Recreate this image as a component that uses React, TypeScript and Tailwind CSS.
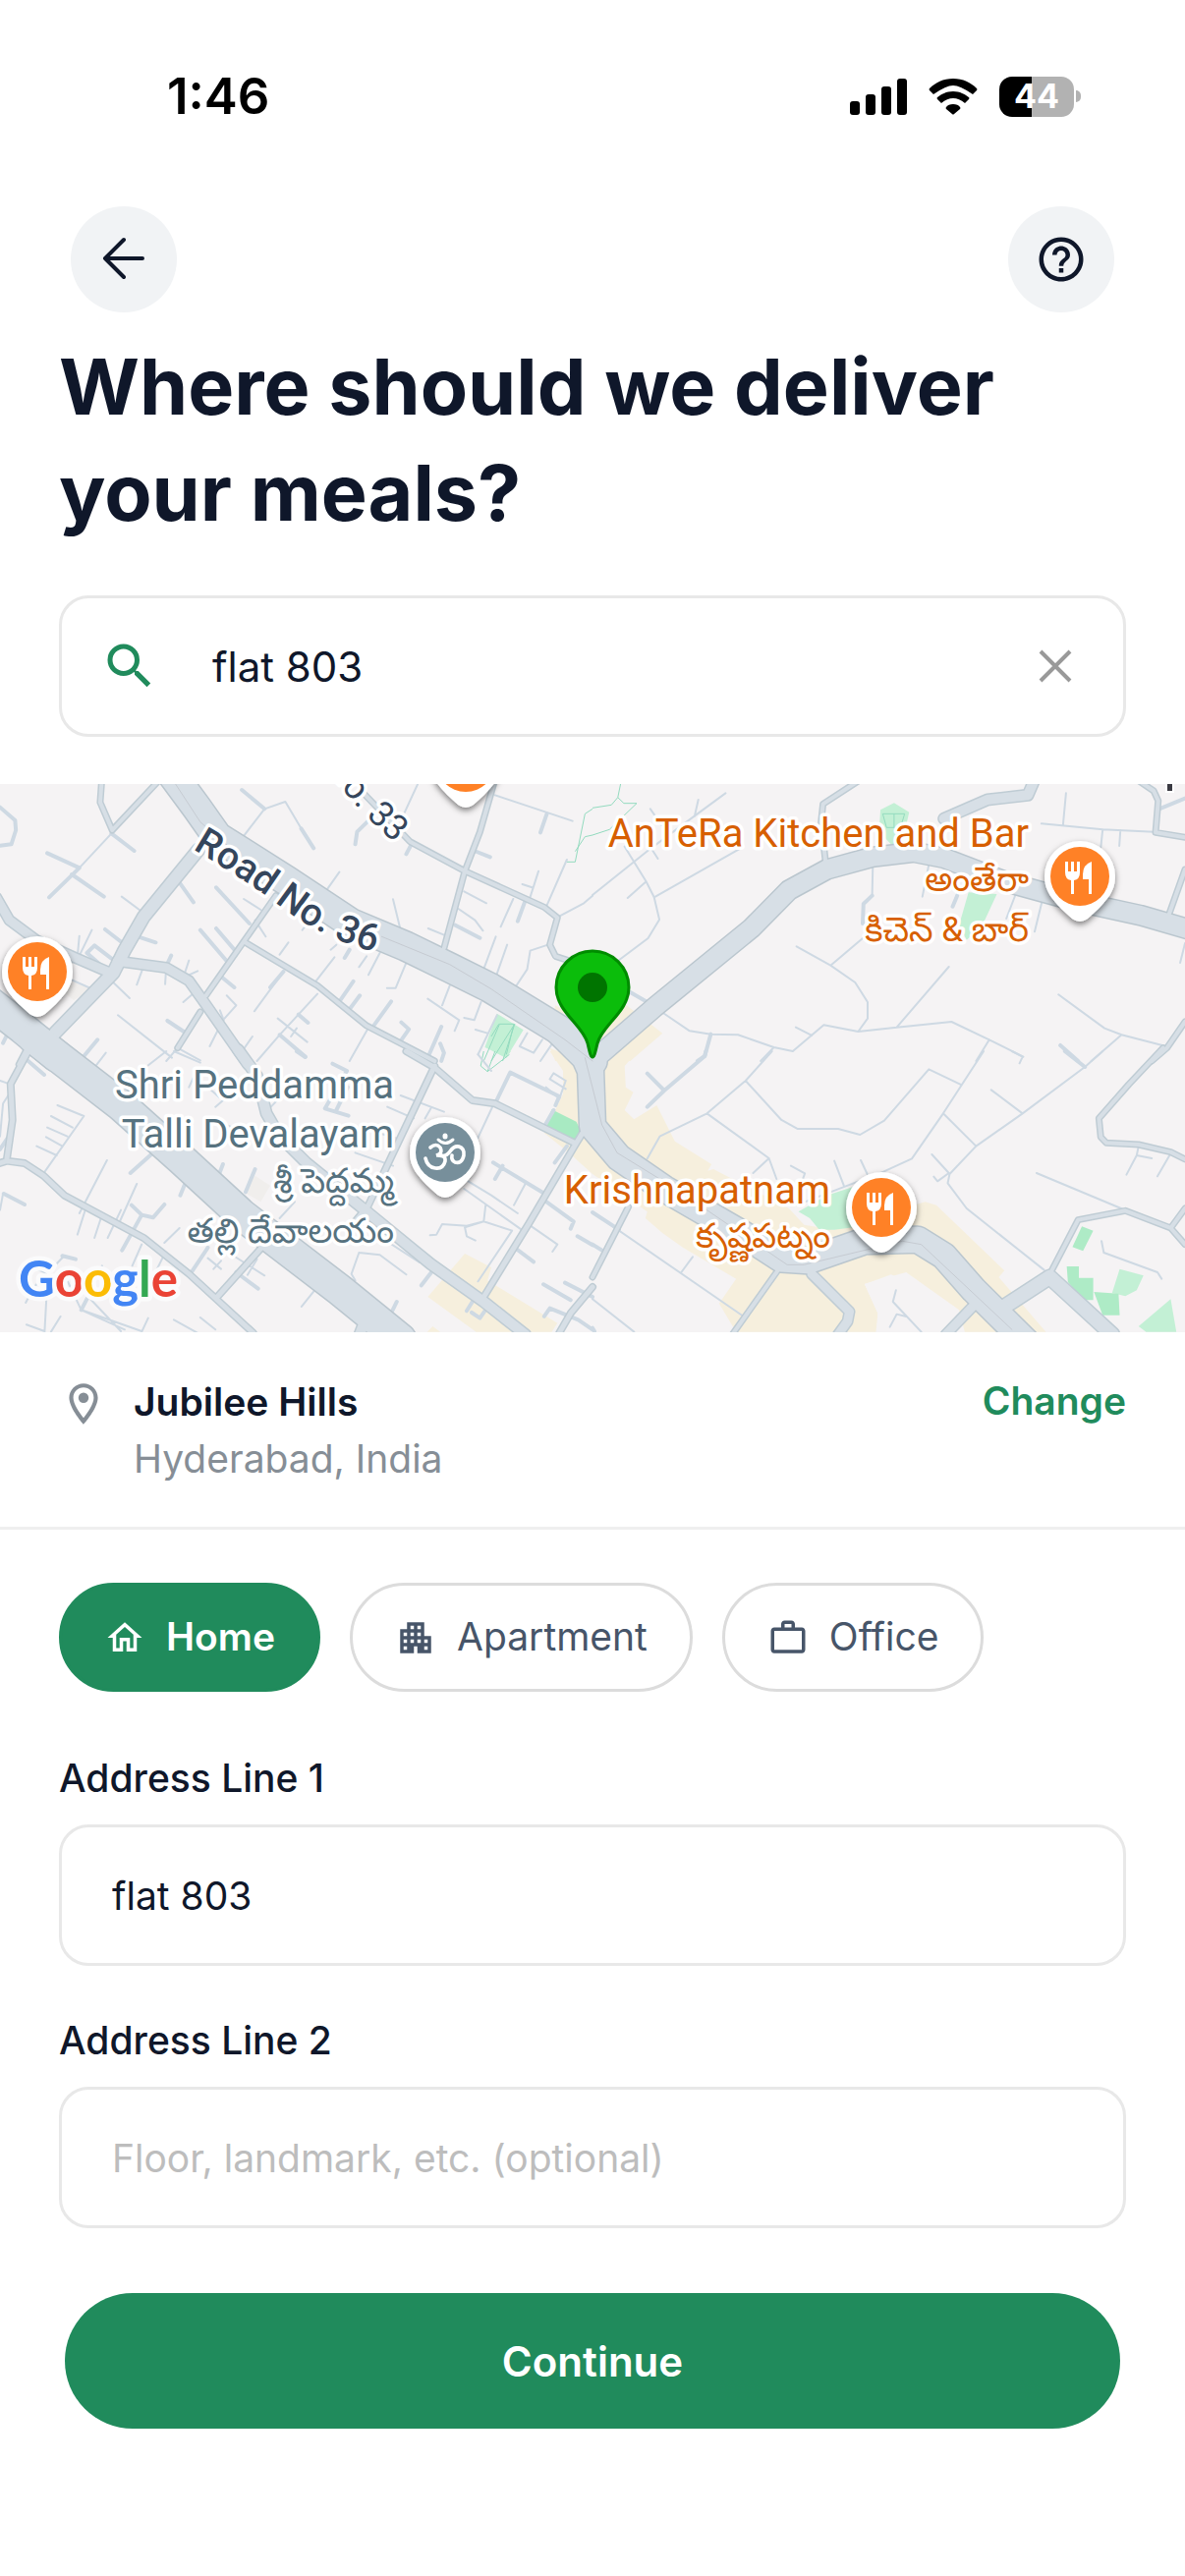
import { useState } from "react";
import {
  MdApartment,
  MdHelpOutline,
  MdOutlineHome,
  MdOutlineLocationOn,
  MdSearch,
  MdWorkOutline,
} from "react-icons/md";

type Tile = "nw" | "ne" | "sw" | "se";
type Road = { tile: Tile; width: number; d: string };

const tileTransform: Record<Tile, string> = {
  nw: "translate(0 -8) scale(0.3846 0.3333)",
  ne: "translate(603 -8) scale(0.3846 0.3333)",
  sw: "translate(0 272) scale(0.3846 0.3333)",
  se: "translate(603 272) scale(0.3846 0.3333)",
};

const lanes: Road[] = [
  {
    tile: "nw",
    width: 4,
    d: "M0 95L40 135L42 165L30 208L0 212M640 42L700 100M295 175L355 228M125 235L210 280M190 300L275 368M210 280L130 370M475 325L512 385M572 340L660 450M530 470L600 565M572 465L620 530M278 468L325 510M365 490L412 508M797 160L830 220M985 125L945 170L940 208M1090 205L1075 238M1255 228L1297 247M1447 115L1430 172M1390 380L1370 443M1205 455L1270 494M585 612L620 645M443 747L490 783M453 548L440 580M935 627L900 685M952 670L925 712M1035 688L990 760M750 597L715 645M790 728L815 753M740 790L808 857M1062 752L1082 773L1062 806M1168 765L1130 865M1165 817L1175 845L1168 870M258 805L215 865M25 775L8 815M925 530L912 555M230 540L250 517L295 557M230 540L265 575",
  },
  {
    tile: "nw",
    width: 2,
    d: "M640 190L700 100L755 78L797 160M295 175L210 280M322 368L380 418M645 375L690 408M675 440L703 490M210 488L205 550M243 470L205 560M190 622L240 648M295 625L343 678M377 590L362 637M440 580L437 635M500 563L485 615L523 595M312 730L455 860M550 690L470 830L440 870M470 830L530 868M600 670L625 700L590 745L555 825M582 715L592 745M510 665L485 690M763 508L740 545M750 597L673 718M885 553L830 635M840 665L740 790L680 870M735 740L813 812M785 770L770 795M668 795L635 850M975 768L925 870M1105 25L1065 125M898 293L858 358M1040 376L1060 470M820 440L800 470M1310 58L1515 137M1425 290L1400 380M1382 330L1408 340M1500 255L1445 400M1480 428L1545 388L1568 365M1358 375L1325 460M1228 352L1287 388M1213 405L1257 440L1278 472M1133 465L1175 485M1312 490L1278 595M1342 515L1310 620M1450 515L1403 533L1395 590L1365 642M1005 540L975 607M970 550L950 583M890 515L875 530M1075 570L1047 647L1024 647M1190 640L1170 700M1132 680L1215 745L1203 778M1273 690L1255 745L1228 738M1315 730L1265 850M1258 774L1290 785M1395 785L1375 825L1412 845L1435 805M1480 785L1430 870",
  },
  {
    tile: "ne",
    width: 2,
    d: "M280 72L270 123M352 52L260 130L155 220L0 363M153 100L183 150M85 215L142 322L163 370L177 438L147 495L70 562M155 220L173 252M142 322L93 372M163 370L390 222M742 265L740 365L717 390L715 450M890 270L873 368M965 360L953 398M1120 360L1095 435M1190 380L1170 475M725 485L630 578M540 520L630 578L695 630L728 690L728 740L703 780M943 582L805 767M183 720L257 778L313 788L385 790L480 828L530 840L612 760L703 780L805 767L950 750L1050 805L1140 857M538 767L580 792M480 828L445 870M1050 805L1015 870M1233 667L1355 770L1400 790L1518 825M1400 790L1320 870M1188 145L1350 163L1485 170M1253 52L1245 150M1350 163L1345 218M1397 165L1394 213M1568 510L1555 570",
  },
  {
    tile: "ne",
    width: 4,
    d: "M313 788L297 855L278 870M1238 822L1285 870M740 365L717 390L715 450M965 365L953 398M1500 100L1568 68M100 660L145 690",
  },
  {
    tile: "sw",
    width: 2,
    d: "M0 90L20 98M30 120L8 160L0 260M152 165L222 198L117 370M135 198L192 233M125 233L178 260M122 262L165 290M97 290L150 318M283 333L210 495M8 435L0 485M225 487L205 560M267 510L250 570M320 485L285 570M362 405L315 525M280 5L250 50M440 0L340 90M460 0L530 35M520 60L500 110M475 540L435 585M375 590L350 655M435 620L405 690M270 655L215 790M170 625L90 720L68 768M65 650L180 705L215 790L375 855M215 790L330 850M180 685L320 855M125 710L118 857M70 835L118 855M160 810L135 857M392 815L375 857M460 820L530 865M550 632L585 665M585 640L565 665M605 615L700 685M680 635L655 683M530 813L570 850M845 712L798 780M780 460L740 510M585 525L565 560M940 310L1040 350M975 240L1060 270M1060 135L1175 185M1025 170L1095 205M1140 175L1125 205M1305 165L1240 325M1150 335L1300 440L1370 495M1228 420L1380 545M1285 470L1280 520L1355 548M1280 520L1230 538L1235 565L1258 578M1280 520L1235 533L1170 528L1155 560L1138 562M1390 405L1360 470M1355 548L1265 703M950 615L1005 622L1075 682M1010 570L1110 645M950 615L930 680L940 700M1400 530L1475 590L1462 612M1445 110L1480 145M1497 90L1480 145M1497 90L1465 67L1455 85L1497 115M580 140L540 100M600 140L570 170M555 205L680 262M750 130L700 190M1300 60L1265 10",
  },
  {
    tile: "sw",
    width: 4,
    d: "M65 20L117 72M10 435L65 468M20 265L0 300M500 375L477 440M345 372L420 295M348 470L375 500L405 508L435 468M375 500L323 608M165 625L200 635M232 752L215 790M550 600L505 678M625 675L683 725M675 360L650 430M590 345L580 375M1145 670L1115 715M1050 765L1035 800M1310 160L1350 65L1480 138M1480 138L1470 165M1440 230L1465 180M1305 340L1437 432M1330 350L1310 390M1500 290L1468 340M1440 455L1518 520L1510 542M1528 565L1568 592M1362 600L1412 643M1438 712L1510 760M1495 707L1568 750M1440 810L1455 785L1530 820L1568 850M1250 765L1235 793M1248 798L1270 815L1282 795M785 0L808 18M880 38L918 60L860 175M860 175L922 197M920 110L890 180",
  },
  {
    tile: "se",
    width: 2,
    d: "M475 0L405 90L303 190L178 260L145 328M405 90L500 210L542 237L650 237L708 255L772 212L890 55L977 103M1035 0L977 103L928 190L845 328L770 368L540 470M303 190L467 327L487 390M467 327L425 372M525 350L562 373L550 410M640 335L665 410M710 333L727 375M928 190L1015 290L945 375L940 403L990 480L1195 668M1055 118L1138 190M1350 0L1303 48L1138 190L1015 290M898 315L943 372L913 397L903 383M1175 372L1405 483M1445 290L1440 318L1413 377M1440 318L1480 327M1527 318L1495 382M1347 580L1353 615L1495 675L1506 695M803 730L795 765L870 857M830 810L805 803L787 842M0 492L400 810M265 628L235 675M0 757L110 857M1110 0L1138 17L1130 37",
  },
  {
    tile: "se",
    width: 4,
    d: "M300 0L297 15L190 120L145 170M145 68L190 120M1250 0L1303 48M0 492L70 545M0 590L25 608M0 845L5 855",
  },
];

const streets: Road[] = [
  {
    tile: "nw",
    width: 7,
    d: "M270 0L265 80L297 165M415 20L297 165M960 50L1085 200L1230 290L1440 400L1475 432L1455 515L1470 550L1510 565M1310 10L1270 170L1230 290L1175 525M730 365L645 505L545 670M645 505L840 640L970 762L1150 870M530 720L470 830M75 825L50 880",
  },
  {
    tile: "nw",
    width: 12,
    d: "M-10 370L25 440L95 500L200 555L290 600M310 565L440 585L500 625L540 690L655 880",
  },
  { tile: "nw", width: 15, d: "M525 225L380 430L330 530L300 600L145 785" },
  {
    tile: "ne",
    width: 7,
    d: "M710 10L610 85L605 140L618 275M1440 10L1485 45L1497 75L1490 172L1568 187M1568 285L1523 430M1568 750L1520 830L1480 870",
  },
  { tile: "ne", width: 13, d: "M1170 10L1152 58L1045 72L930 130" },
  {
    tile: "sw",
    width: 8,
    d: "M75 0L28 100L33 210L18 330M-10 345L18 335L65 342L115 380L170 440L380 570L500 680L670 860M1075 0L1150 50L1250 150L1310 160L1520 280M1150 45L1020 360L975 470L940 520M575 750L700 590M1568 200L1520 290L1400 525L1275 760M1568 720L1510 800L1480 860",
  },
  {
    tile: "sw",
    width: 13,
    d: "M630 -5L680 75L705 190L740 260L810 340L960 480L1140 650L1280 765L1390 865M970 810L950 870",
  },
  {
    tile: "se",
    width: 7,
    d: "M1510 -10L1420 100L1340 205L1345 262L1360 280L1445 285L1530 308L1568 330M1215 670L1285 515L1410 487L1530 540L1568 590M1530 540L1568 480M95 475L0 690M490 670L370 865",
  },
  { tile: "se", width: 12, d: "M580 680L680 795L675 825L650 865M1010 775L935 865" },
  { tile: "se", width: 17, d: "M1090 780L1210 690L1375 865" },
];

const highways: Road[] = [
  {
    tile: "nw",
    width: 30,
    d: "M440 -30L520 95L575 185L760 320L930 450L1075 520L1190 585L1295 645L1480 775L1568 870",
  },
  { tile: "nw", width: 32, d: "M-40 680L60 770L150 855" },
  {
    tile: "ne",
    width: 20,
    d: "M0 870L165 705L420 465L520 348L620 285L740 247L850 232L930 250L1100 325L1290 385L1450 425L1600 475",
  },
  { tile: "sw", width: 32, d: "M90 -40L320 165L480 330L640 500L900 730L1060 880" },
  {
    tile: "se",
    width: 27,
    d: "M-90 -60L-20 20L-5 60L0 230L70 325L190 420L400 560L500 635L570 640L720 580L860 575L930 625L1010 730L1150 890",
  },
];

const medians: Road[] = [
  { tile: "nw", width: 1, d: "M465 25L530 140L600 210M1010 490L1190 575L1300 650L1495 805L1568 870" },
  { tile: "se", width: 1, d: "M-20 20L25 225L65 310L220 420L515 652L560 652L820 580L870 590L1110 850" },
];

const patches: { tile: Tile; fill: string; d: string }[] = [
  { tile: "ne", fill: "#f6efdd", d: "M0 700L90 700L185 785L100 870L0 870Z" },
  { tile: "nw", fill: "#f6efdd", d: "M1460 740L1470 700L1500 720ZM1455 830L1520 860L1500 870L1470 870Z" },
  { tile: "nw", fill: "#f0eeec", d: "M190 625L240 650L195 685L160 650Z" },
  { tile: "sw", fill: "#f0eeec", d: "M675 380L715 410L690 460L645 430Z" },
  {
    tile: "sw",
    fill: "#f6efdd",
    d: "M1455 0L1568 0L1568 375L1505 310L1440 250L1490 130L1490 60ZM1230 618L1300 660L1290 700L1475 830L1460 857L1260 857L1132 750ZM1145 840L1165 857L1130 857Z",
  },
  {
    tile: "se",
    fill: "#f6efdd",
    d: "M0 0L120 0L85 45L88 110L108 125L85 180L110 208L170 165L218 275L315 345L305 365L320 360L520 480L560 530L640 545L880 460L910 470L1090 670L1075 690L1200 857L985 857L970 790L830 675L720 710L755 800L750 857L380 857L335 770L380 695L240 600L185 555L140 510L145 490L0 375Z",
  },
  { tile: "se", fill: "#f5f3f4", d: "M720 712L790 682L820 695L830 675L985 857L753 857L755 800Z" },
  {
    tile: "se",
    fill: "#c3f0d5",
    d: "M545 490L620 440L700 410L740 530L640 545L600 545L575 510ZM1395 665L1458 685L1440 730L1410 748L1375 738ZM1530 757L1545 857L1465 857L1445 840Z",
  },
  {
    tile: "se",
    fill: "#aeebc6",
    d: "M1295 535L1325 548L1298 610L1270 598ZM1255 657L1287 657L1287 692L1325 692L1325 760L1300 760L1258 705ZM1327 735L1392 740L1395 806L1350 806Z",
  },
  { tile: "sw", fill: "#a8eac2", d: "M1460 178L1525 215L1540 250L1520 280L1442 230ZM970 832L1000 857L965 857Z" },
  { tile: "nw", fill: "#c3f0d5", d: "M1315 725L1385 775L1340 860L1283 828Z" },
  { tile: "sw", fill: "#c3f0d5", d: "M1305 0L1352 0L1338 20Z" },
  { tile: "ne", fill: "#c3f0d5", d: "M798 82L838 110L830 150L800 220L775 190L760 140L762 103ZM995 355L1070 360L1030 460L990 500L970 455Z" },
];

const trails: { tile: Tile; d: string }[] = [
  { tile: "nw", d: "M1500 262L1522 262L1548 115L1568 100M1522 230L1548 185L1568 180M1280 870L1322 757L1360 757L1340 850M1300 870L1362 757L1330 870M1320 757L1300 795" },
  { tile: "ne", d: "M75 20L67 65L50 88L0 97M67 65L83 83L117 83L45 163L0 180M768 115L826 115L815 157L778 157ZM798 115L798 157" },
  { tile: "sw", d: "M1280 0L1272 45L1290 62L1348 10M1310 0L1290 62" },
];

function RoadSet({ roads, color, extra = 0 }: { roads: Road[]; color: string; extra?: number }) {
  return (
    <>
      {roads.map((road, i) => (
        <g key={i} transform={tileTransform[road.tile]}>
          <path
            d={road.d}
            fill="none"
            stroke={color}
            strokeWidth={road.width + extra}
            strokeLinejoin="round"
            strokeLinecap="round"
            vectorEffect="non-scaling-stroke"
          />
        </g>
      ))}
    </>
  );
}

function PlacePin({ x, y, color, children }: { x: number; y: number; color: string; children: React.ReactNode }) {
  return (
    <g transform={`translate(${x} ${y})`}>
      <path
        d="M0 -36A36 36 0 0 1 36 0C36 16 27 24 19 33L8 43Q0 49 -8 43L-19 33C-27 24 -36 16 -36 0A36 36 0 0 1 0 -36Z"
        fill="#fff"
        filter="url(#pin-shadow)"
      />
      <circle r="30" fill={color} />
      {children}
    </g>
  );
}

function Cutlery() {
  return (
    <path
      d="M-15 -15V-4Q-15 3 -9 4V18H-6V4Q0 3 0 -4V-15H-3V-5H-6V-15H-9V-5H-12V-15ZM12 -15Q3 -12 3 -2V3H9V18H12Z"
      fill="#fff"
    />
  );
}

type PlaceLabelProps = {
  x: number;
  color: string;
  english: [string, number][];
  telugu: [string, number][];
};

function PlaceLabel({ x, color, english, telugu }: PlaceLabelProps) {
  return (
    <g fill={color} textAnchor="end" stroke="#fff" strokeWidth="7" strokeLinejoin="round" paintOrder="stroke">
      {english.map(([text, y]) => (
        <text key={text} x={x} y={y} fontSize="40">
          {text}
        </text>
      ))}
      {telugu.map(([text, y]) => (
        <text key={text} x={x} y={y} fontSize="35">
          {text}
        </text>
      ))}
    </g>
  );
}

const logoLetters: [string, string][] = [
  ["G", "#4285f4"],
  ["o", "#ea4335"],
  ["o", "#fbbc05"],
  ["g", "#4285f4"],
  ["l", "#34a853"],
  ["e", "#ea4335"],
];

function DeliveryMap() {
  return (
    <svg
      className="block h-[558px] w-full font-[Roboto,'Noto_Sans_Telugu','Noto_Sans',sans-serif]"
      viewBox="0 0 1206 558"
      preserveAspectRatio="xMidYMid slice"
      role="img"
      aria-label="Map of Jubilee Hills, Hyderabad"
    >
      <defs>
        <filter id="pin-shadow" x="-30%" y="-30%" width="160%" height="170%">
          <feDropShadow dx="0" dy="3" stdDeviation="3" floodColor="#000" floodOpacity="0.5" />
        </filter>
        <path id="road-36" d="M196 66Q260 104 290 128Q336 162 400 176" />
        <path id="road-33" d="M280 -66L342 -4Q366 30 402 60" />
      </defs>
      <rect width="1206" height="558" fill="#f5f3f4" />
      {patches.map((patch, i) => (
        <path key={i} d={patch.d} fill={patch.fill} transform={tileTransform[patch.tile]} />
      ))}
      {trails.map((trail, i) => (
        <path
          key={i}
          d={trail.d}
          fill="none"
          stroke="#93dbbf"
          strokeWidth="1"
          vectorEffect="non-scaling-stroke"
          transform={tileTransform[trail.tile]}
        />
      ))}
      <RoadSet roads={lanes} color="#ced9e3" />
      <RoadSet roads={streets} color="#bfccd4" />
      <RoadSet roads={highways} color="#bac6ce" extra={2} />
      <RoadSet roads={streets} color="#d7dfe6" extra={-3} />
      <RoadSet roads={highways} color="#d7dfe6" extra={-1} />
      <RoadSet roads={medians} color="#c6cbd2" />

      <g fill="#35465c" stroke="#fff" strokeWidth="7" strokeLinejoin="round" paintOrder="stroke">
        <text fontSize="39" fontWeight="500">
          <textPath href="#road-36">Road No. 36</textPath>
        </text>
        <text fontSize="36" textAnchor="end">
          <textPath href="#road-33" startOffset="100%">
            No. 33
          </textPath>
        </text>
      </g>
      <path d="M1188 0H1193V7H1188Z" fill="#3a3a42" stroke="#fff" strokeWidth="4" paintOrder="stroke" />

      <PlaceLabel
        x={1047}
        color="#d75f00"
        english={[["AnTeRa Kitchen and Bar", 64]]}
        telugu={[
          ["అంతేరా", 109],
          ["కిచెన్ & బార్", 160],
        ]}
      />
      <PlaceLabel
        x={401}
        color="#56727f"
        english={[
          ["Shri Peddamma", 320],
          ["Talli Devalayam", 370],
        ]}
        telugu={[
          ["శ్రీ పెద్దమ్మ", 416],
          ["తల్లి దేవాలయం", 467],
        ]}
      />
      <PlaceLabel
        x={845}
        color="#d75f00"
        english={[["Krishnapatnam", 427]]}
        telugu={[["కృష్ణపట్నం", 472]]}
      />

      <PlacePin x={1099} y={94} color="#ff8126">
        <Cutlery />
      </PlacePin>
      <PlacePin x={38} y={191} color="#ff8126">
        <Cutlery />
      </PlacePin>
      <PlacePin x={897} y={431} color="#ff8126">
        <Cutlery />
      </PlacePin>
      <PlacePin x={474} y={-22} color="#ff8126">
        <Cutlery />
      </PlacePin>
      <PlacePin x={453} y={375} color="#778f9b">
        <g fill="none" stroke="#fff" strokeWidth="3.6" strokeLinecap="round">
          <path d="M-15 -5Q-9 -10 -5 -5Q-2 1 -9 3Q1 2 0 9Q-2 17 -10 16Q-18 15 -20 6" />
          <path d="M-6 3Q1 5 5 -1Q9 -7 14 -6Q20 -4 19 3Q17 12 10 10Q6 8 7 3" />
          <path d="M-7 -13Q0 -6 8 -13" strokeWidth="3" />
          <path d="M0 -17V-16" strokeWidth="5" />
        </g>
      </PlacePin>

      <path
        d="M603 278C601 278 600 272 598 264C593 245 566 232 566 207A37 37 0 0 1 640 207C640 232 613 245 608 264C606 272 605 278 603 278Z"
        fill="#0bbd0b"
        stroke="#008c00"
        strokeWidth="3"
      />
      <circle cx="603" cy="207" r="15" fill="#007400" />

      <text
        x="19"
        y="522"
        fontSize="51"
        className="font-[Lato,sans-serif]"
        fontWeight="700"
        stroke="#fbfbfc"
        strokeWidth="9"
        strokeLinejoin="round"
        paintOrder="stroke"
      >
        {logoLetters.map(([letter, color], i) => (
          <tspan key={i} fill={color}>
            {letter}
          </tspan>
        ))}
      </text>
    </svg>
  );
}

function StatusBar() {
  return (
    <div className="flex items-center justify-between pt-[72px] pr-[106px] pl-[170px]">
      <span className="text-[51px] leading-[52px] font-semibold text-black">1:46</span>
      <div className="flex items-center gap-[22px]">
        <svg className="h-[38px] w-[58px]" viewBox="0 0 58 38" aria-hidden="true">
          <rect x="0" y="24" width="10" height="14" rx="3" />
          <rect x="16" y="17" width="10" height="21" rx="3" />
          <rect x="32" y="9" width="10" height="29" rx="3" />
          <rect x="48" y="1" width="10" height="37" rx="3" />
        </svg>
        <svg className="h-[38px] w-[50px]" viewBox="0 0 50 38" aria-hidden="true">
          <path d="M25 1C15 1 7 5 1 11Q0 12 1 13L5 17Q18 8 25 8Q32 8 45 17L49 13Q50 12 49 11C43 5 35 1 25 1Z" />
          <path d="M25 14C18 14 13 17 9 20Q8 21 9 22L13 26Q19 21 25 21Q31 21 37 26L41 22Q42 21 41 20C37 17 32 14 25 14Z" />
          <path d="M25 27C22 27 19 28 18 30Q17 31 18 32L24 37Q25 38 26 37L32 32Q33 31 32 30C31 28 28 27 25 27Z" />
        </svg>
        <div className="flex items-center gap-[2px]">
          <div className="flex h-[41px] w-[76px] items-center justify-center rounded-[13px] bg-[linear-gradient(to_right,#000_33px,#b2b2b2_33px)] text-[34px] leading-none font-bold text-white">
            44
          </div>
          <div className="h-[12px] w-[5px] rounded-r-full bg-[#b2b2b2]" />
        </div>
      </div>
    </div>
  );
}

const placeTypes = [
  { name: "Home", Icon: MdOutlineHome },
  { name: "Apartment", Icon: MdApartment },
  { name: "Office", Icon: MdWorkOutline },
];

const fieldClass =
  "mt-[17px] h-[144px] w-full rounded-[30px] border-3 border-[#e8e8e8] bg-white px-[51px] text-[39px] text-[#0f172a] outline-none placeholder:text-[#bdbdbd]";

export default function App() {
  const [query, setQuery] = useState("flat 803");
  const [place, setPlace] = useState("Home");
  const [line1, setLine1] = useState("flat 803");
  const [line2, setLine2] = useState("");

  return (
    <main className="min-h-screen bg-white pb-[150px] font-[Inter,sans-serif] text-[#0f172a]">
      <StatusBar />

      <header className="mt-[86px] flex justify-between px-[72px]">
        <button aria-label="Back" className="flex size-[108px] items-center justify-center rounded-full bg-[#f1f3f5]">
          <svg className="size-[66px]" viewBox="0 0 66 66" fill="none" stroke="#0f172a" strokeWidth="4" strokeLinecap="round" strokeLinejoin="round" aria-hidden="true">
            <path d="M33 13L14 32L33 51M14 32H52" />
          </svg>
        </button>
        <button aria-label="Help" className="flex size-[108px] items-center justify-center rounded-full bg-[#f1f3f5]">
          <MdHelpOutline className="size-[54px]" />
        </button>
      </header>

      <h1 className="mt-[21px] max-w-[1140px] px-[60px] text-[79px] leading-[108px] font-bold">
        Where should we deliver your meals?
      </h1>

      <div className="mx-[60px] mt-[51px] flex h-[144px] items-center rounded-[30px] border-3 border-[#e8e8e8] pr-[42px] pl-[39px]">
        <MdSearch className="size-[60px] shrink-0 text-[#208b5c]" />
        <input
          aria-label="Search address"
          className="ml-[54px] min-w-0 flex-1 text-[42px] outline-none"
          value={query}
          onChange={(e) => setQuery(e.target.value)}
        />
        <button aria-label="Clear search" onClick={() => setQuery("")}>
          <svg className="size-[54px]" viewBox="0 0 54 54" fill="none" stroke="#999" strokeWidth="4" aria-hidden="true">
            <path d="M12 12L42 42M42 12L12 42" />
          </svg>
        </button>
      </div>

      <div className="mt-[48px]">
        <DeliveryMap />
      </div>

      <section className="flex items-start border-b-3 border-[#efefef] px-[60px] pt-[42px] pb-[40px]">
        <MdOutlineLocationOn className="mt-[6px] size-[50px] shrink-0 text-[#868e96]" />
        <div className="ml-[26px] flex-1">
          <p className="text-[39px] leading-[58px] font-semibold">Jubilee Hills</p>
          <p className="text-[39px] leading-[58px] text-[#868e96]">Hyderabad, India</p>
        </div>
        <button className="text-[39px] leading-[56px] font-semibold text-[#208b5c]">Change</button>
      </section>

      <div className="mt-[54px] flex gap-[30px] px-[60px]">
        {placeTypes.map(({ name, Icon }) => (
          <button
            key={name}
            aria-pressed={place === name}
            onClick={() => setPlace(name)}
            className={
              place === name
                ? "flex h-[111px] items-center gap-[21px] rounded-full border-3 border-[#208b5c] bg-[#208b5c] px-[43px] text-[39px] font-semibold text-white"
                : "flex h-[111px] items-center gap-[21px] rounded-full border-3 border-[#dcdcdc] bg-white px-[43px] text-[39px] text-[#475569]"
            }
          >
            <Icon className="size-[42px]" />
            {name}
          </button>
        ))}
      </div>

      <form className="px-[60px]" onSubmit={(e) => e.preventDefault()}>
        <label htmlFor="line1" className="mt-[58px] block text-[39px] leading-[60px] font-medium">
          Address Line 1
        </label>
        <input id="line1" className={fieldClass} value={line1} onChange={(e) => setLine1(e.target.value)} />
        <label htmlFor="line2" className="mt-[46px] block text-[39px] leading-[60px] font-medium">
          Address Line 2
        </label>
        <input
          id="line2"
          className={fieldClass}
          placeholder="Floor, landmark, etc. (optional)"
          value={line2}
          onChange={(e) => setLine2(e.target.value)}
        />
        <div className="px-[6px] pt-[66px]">
          <button type="submit" className="h-[138px] w-full rounded-full bg-[#208b5c] text-[42px] font-semibold text-white">
            Continue
          </button>
        </div>
      </form>
    </main>
  );
}
